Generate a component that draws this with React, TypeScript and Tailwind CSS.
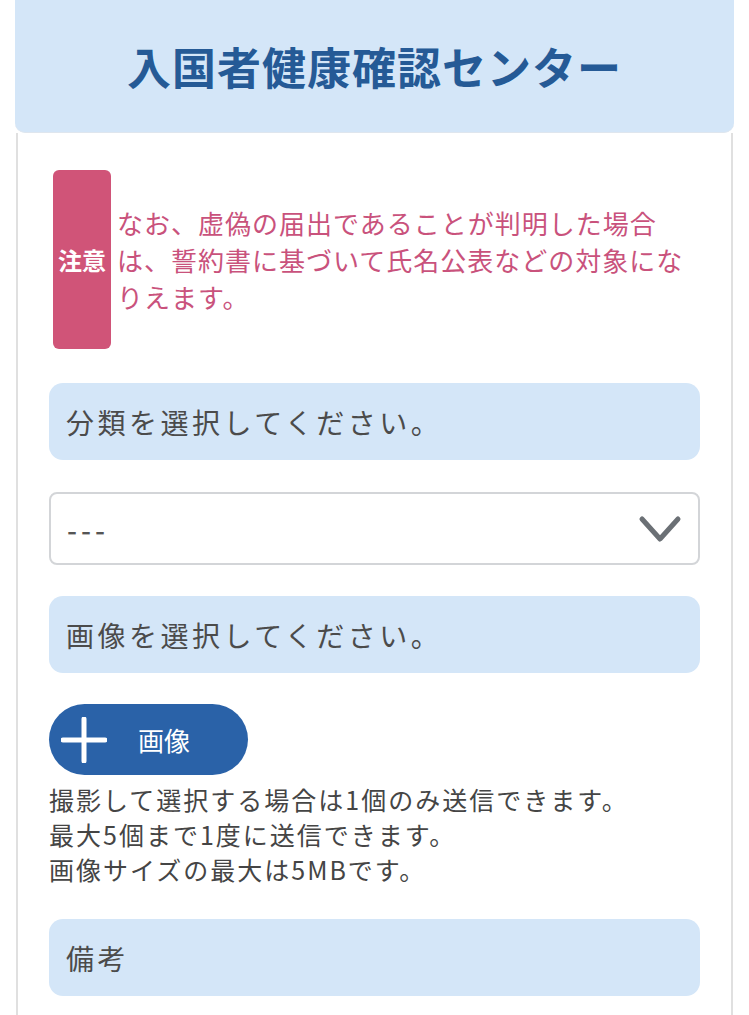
import React from "react";

const jp = { fontFamily: '"Noto Sans CJK JP", "Noto Sans", sans-serif' };

function Label({ text }: { text: string }) {
  return (
    <div className="flex h-[77px] items-center rounded-[14px] bg-[#d4e6f8] pl-[17px] text-[28px] tracking-[3.5px] text-[#4b4b4b]">
      {text}
    </div>
  );
}

export default function App() {
  return (
    <div className="min-h-[1015px] bg-white" style={jp}>
      <div className="mx-[15px] flex h-[133px] items-center justify-center rounded-b-[10px] border-b border-[#dfe6ee] bg-[#d4e6f8]">
        <h1 className="text-[44px] font-bold tracking-[1px] text-[#255a96]">
          入国者健康確認センター
        </h1>
      </div>
      <div className="mx-[16px] min-h-[882px] border-x-2 border-[#e0e0e0] px-[31px] pt-[37px]">
        {/* notice */}
        <div className="ml-[4px] flex items-center gap-[6px]">
          <div className="flex h-[179px] w-[58px] shrink-0 items-center justify-center rounded-[6px] bg-[#d05478] text-[24px] font-bold text-white">
            注意
          </div>
          <p className="text-[26px] leading-[37px] tracking-[1px] text-[#c9527c]">
            なお、虚偽の届出であることが判明した場合は、誓約書に基づいて氏名公表などの対象になりえます。
          </p>
        </div>

        <div className="mt-[34px] flex flex-col">
          <Label text="分類を選択してください。" />
          <div className="mt-[32px] flex h-[73px] items-center justify-between rounded-[8px] border-2 border-[#d3d5d8] pl-[16px] pr-[16px]">
            <span className="text-[28px] font-medium tracking-[4px] text-[#555]">---</span>
            <svg width="44" height="30" viewBox="0 0 44 30">
              <path d="M4 5 L22 25 L40 5" fill="none" stroke="#6b7075" strokeWidth="5" strokeLinecap="round" strokeLinejoin="round" />
            </svg>
          </div>
          <div className="mt-[31px]">
            <Label text="画像を選択してください。" />
          </div>
          <div className="mt-[31px]">
            <button className="flex h-[71px] w-[199px] items-center rounded-full bg-[#2a62a8] pl-[12px] text-white">
              <svg width="46" height="46" viewBox="0 0 46 46">
                <path d="M23 2 V44 M2 23 H44" stroke="white" strokeWidth="5" strokeLinecap="round" />
              </svg>
              <span className="ml-[31px] text-[26px]">画像</span>
            </button>
          </div>
          <div className="mt-[7px] text-[25px] leading-[35px] tracking-[2px] text-[#454545]">
            <p>撮影して選択する場合は1個のみ送信できます。</p>
            <p>最大5個まで1度に送信できます。</p>
            <p>画像サイズの最大は5MBです。</p>
          </div>
          <div className="mt-[32px]">
            <Label text="備考" />
          </div>
        </div>
      </div>
    </div>
  );
}
